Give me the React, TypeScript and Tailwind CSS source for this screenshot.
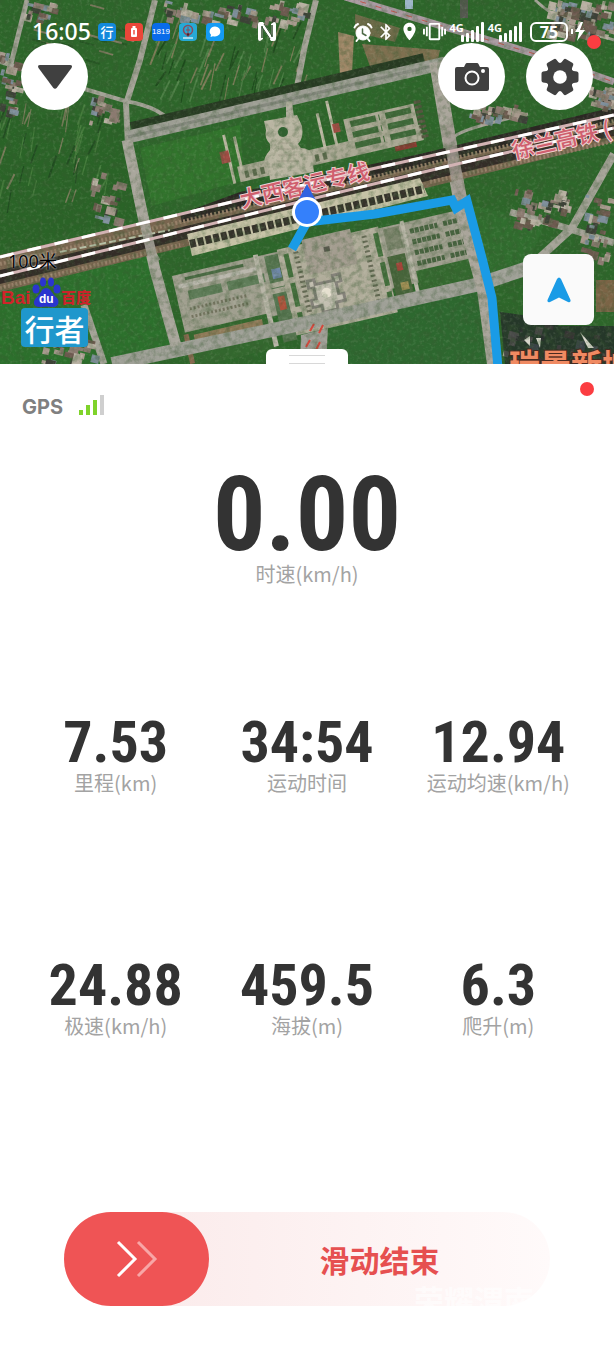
import React from "react";
import { MdBluetooth, MdLocationOn, MdVibration } from "react-icons/md";
import clsx from "clsx";

const digitFont = "font-['Roboto_Condensed',Roboto,sans-serif] font-bold";

const metrics = [
  { value: "7.53", label: "里程(km)" },
  { value: "34:54", label: "运动时间" },
  { value: "12.94", label: "运动均速(km/h)" },
  { value: "24.88", label: "极速(km/h)" },
  { value: "459.5", label: "海拔(m)" },
  { value: "6.3", label: "爬升(m)" },
];

// small seeded generator, keeps the scattered map detail stable between renders
function scatter(
  seed: number,
  count: number,
  x: number,
  y: number,
  w: number,
  h: number
) {
  let s = seed;
  const next = () => {
    s = (s * 16807) % 2147483647;
    return s / 2147483647;
  };
  return Array.from({ length: count }, () => ({
    x: x + next() * w,
    y: y + next() * h,
    a: next(),
    b: next(),
    c: Math.floor(next() * 6),
  }));
}

const roofColors = ["#8b7a70", "#a89a8e", "#6e5a50", "#7f8f9c", "#b8b0a2", "#3d4038"];

const villages = [
  { seed: 11, count: 60, x: 165, y: 0, w: 145, h: 20 },
  { seed: 23, count: 30, x: 0, y: 50, w: 18, h: 60 },
  { seed: 37, count: 90, x: 548, y: 0, w: 64, h: 34 },
  { seed: 5, count: 40, x: 470, y: 104, w: 52, h: 14 },
  { seed: 71, count: 40, x: 590, y: 85, w: 24, h: 18 },
  { seed: 91, count: 45, x: 515, y: 188, w: 50, h: 34 },
  { seed: 17, count: 22, x: 92, y: 172, w: 26, h: 45 },
  { seed: 29, count: 30, x: 582, y: 190, w: 32, h: 70 },
  { seed: 53, count: 20, x: 90, y: 95, w: 24, h: 26 },
  { seed: 67, count: 16, x: 25, y: 2, w: 26, h: 14 },
  { seed: 83, count: 24, x: 42, y: 336, w: 52, h: 26 },
  { seed: 97, count: 26, x: 504, y: 320, w: 108, h: 40 },
];

const road = "#a5a398";

function SatelliteMap() {
  return (
    <svg
      className="absolute inset-0 h-full w-full"
      viewBox="0 0 614 364"
      preserveAspectRatio="xMidYMid slice"
      aria-hidden="true"
    >
      <defs>
        <filter id="grain" x="0" y="0" width="100%" height="100%">
          <feTurbulence type="fractalNoise" baseFrequency="0.16" numOctaves="4" seed="4" />
          <feColorMatrix values="0 0 0 0 0.04  0 0 0 0 0.1  0 0 0 0 0.03  2.4 0 0 0 -0.95" />
        </filter>
        <filter id="light" x="0" y="0" width="100%" height="100%">
          <feTurbulence type="fractalNoise" baseFrequency="0.3" numOctaves="2" seed="9" />
          <feColorMatrix values="0 0 0 0 0.75  0 0 0 0 0.8  0 0 0 0 0.65  0 2.2 0 0 -1.1" />
        </filter>
      </defs>
      <rect width="614" height="364" fill="#2d662a" />
      <path d="M0 115H120L142 215L0 250Z" fill="#2a6327" />
      <path d="M140 148L240 125L244 180L152 206Z" fill="#31742c" />
      <path d="M0 290L90 268L150 255L175 345L105 364H0Z" fill="#2c702c" />
      <path d="M330 322L478 286L492 364H325Z" fill="#2d682f" />
      <path d="M470 205L545 222L524 275L490 270Z" fill="#306d2e" />

      {/* narrow field strips */}
      {scatter(41, 60, 160, 12, 150, 70).map((p, i) => (
        <path
          key={i}
          d={`M${p.x} ${p.y}l${-4 - p.a * 6} ${14 + p.b * 14}`}
          stroke={p.c > 3 ? "#7d7c58" : p.c > 1 ? "#1d4a1c" : "#4d8046"}
          strokeWidth={1 + p.a}
        />
      ))}
      {scatter(8, 50, 0, 100, 110, 90).map((p, i) => (
        <path
          key={i}
          d={`M${p.x} ${p.y}l${-3 - p.a * 5} ${12 + p.b * 16}`}
          stroke={p.c > 4 ? "#7b7c5c" : p.c > 2 ? "#204c20" : "#457c3c"}
          strokeWidth={1 + p.a}
        />
      ))}
      {scatter(77, 18, 30, 0, 105, 60).map((p, i) => (
        <path
          key={i}
          d={`M${p.x} ${p.y}l14 4`}
          stroke={p.c > 3 ? "#807a60" : "#245522"}
          strokeWidth="2"
        />
      ))}
      <path d="M338 32L354 36L352 74L340 76Z" fill="#a08868" />
      <path d="M362 44L440 50L438 60L372 72Z" fill="#7f7050" />
      <path d="M355 14L400 28L395 42L355 32Z" fill="#6d6a48" />
      <rect x="460" y="0" width="8" height="18" fill="#54584f" />
      <rect x="405" y="0" width="8" height="9" fill="#9db5c9" />

      {/* roads */}
      <g fill="none" stroke={road} strokeLinejoin="round">
        <path d="M27 0L10 68" strokeWidth="5" />
        <path d="M0 62L20 68L88 90L125 101Q165 108 172 126" strokeWidth="4" />
        <path d="M155 0L140 60L126 104L128 145" strokeWidth="6" />
        <path d="M316 0L305 45L296 92" strokeWidth="6" />
        <path d="M345 -3L535 54L614 82" strokeWidth="7" stroke="#aa9aa2" />
        <path d="M614 154L572 228L535 262L500 278" strokeWidth="8" />
        <path d="M510 212L560 226L614 243" strokeWidth="7" />
        <path d="M455 136Q465 128 528 114" strokeWidth="3" />
        <path d="M535 0Q560 24 614 40" strokeWidth="3" />
        <path d="M84 305L104 364" strokeWidth="7" />
      </g>
      <path d="M345 -3L535 54L614 82" stroke="#c4564e" strokeDasharray="6 10" fill="none" />
      <path d="M132 132L425 63" stroke="#273a22" strokeWidth="20" />
      <path d="M128 137L445 63" stroke="#9d9e94" strokeWidth="13" />
      <path d="M128 137L445 63" stroke="#86897f" strokeWidth="3" />

      {/* station forecourt, north side */}
      <g transform="translate(308 216) rotate(-13)">
        <path d="M-58 -64H130V-48H-58Z" fill="#aaa894" />
        <path d="M-64 -98V-48M-54 -94V-60M32 -98V-60M44 -108V-62" stroke="#bdb9a4" strokeWidth="3" />
        <rect x="-72" y="-82" width="9" height="12" fill="#a24c44" />
        <rect x="44" y="-84" width="7" height="9" fill="#a24c44" />
        <rect x="56" y="-86" width="72" height="36" fill="#aaa894" />
        {[-80, -69, -58].map((y) => (
          <path
            key={y}
            d={`M62 ${y}H92M98 ${y}H124`}
            stroke="#3f6939"
            strokeWidth="6"
            strokeDasharray="26 3"
          />
        ))}
        <path d="M132 -88V-50" stroke="#55543f" strokeWidth="7" strokeDasharray="3 2" />
        <rect x="100" y="-48" width="22" height="5" fill="#8a3a31" />
        {[-52, -44, -36, 12, 20, 28].map((x) => (
          <rect key={x} x={x} y="-58" width="4" height="7" fill="#5c6a4d" />
        ))}
      </g>
      <path d="M286 102L292 101L294 118L286 119Z" fill="#b3b0a0" />
      <path
        d="M264 121L276 119L297 115L302 126Q304 138 298 144L301 148Q310 148 312 156L314 172L270 180L268 163Q260 162 270 150V144Q264 138 266 130Z"
        fill="#b9b5a2"
      />
      <circle cx="283" cy="132" r="5" fill="#2f6130" />
      <path d="M278 143H293M278 149H295M278 155H297M278 161H299" stroke="#a29e8c" />

      {/* south side square and car parks */}
      <g transform="translate(307 212) rotate(-13)">
        <rect x="-146" y="32" width="304" height="62" fill="#a09f8f" />
        <rect x="-134" y="36" width="60" height="3" fill="#4a6a43" />
        <rect x="-134" y="50" width="34" height="9" fill="#5f7d59" />
        <rect x="-94" y="50" width="38" height="9" fill="#5f7d59" />
        <path d="M-142 44H-60" stroke="#bab7ad" strokeWidth="4" />
        {[68, 76].map((y) => (
          <path
            key={y}
            d={`M-136 ${y}H-78`}
            stroke="#74735f"
            strokeWidth="3"
            strokeDasharray="2 2"
          />
        ))}
        <rect x="-150" y="90" width="88" height="36" fill="#33682e" />
        <rect x="-138" y="94" width="70" height="11" fill="#8f7a58" />
        <rect x="-148" y="92" width="5" height="30" fill="#8a6a50" />
        <path d="M-60 30V124" stroke="#b9b6a8" strokeWidth="5" />
        <rect x="-52" y="34" width="14" height="88" fill="#567550" />
        <rect x="-48" y="48" width="9" height="10" fill="#6f87a8" />
        <rect x="-48" y="76" width="7" height="14" fill="#ad533c" />
        <path d="M-58 64H-36M-58 70H-36" stroke="#aaa896" strokeWidth="5" />
        <rect x="-38" y="30" width="104" height="88" fill="#b1ad9b" />
        <rect x="-12" y="26" width="50" height="36" fill="#a49d90" />
        <rect x="8" y="38" width="6" height="5" fill="#5c5a50" />
        {[-30, 62].map((x) => (
          <path key={x} d={`M${x} 36V112`} stroke="#44703d" strokeWidth="5" strokeDasharray="24 6" />
        ))}
        {[-20, 50].map((x) => (
          <path key={x} d={`M${x} 36V112`} stroke="#686b57" strokeWidth="5" strokeDasharray="2 3" />
        ))}
        <path d="M-17 66H-7V71H9V66H19V76H14V86H19V96H10V103H-8V96H-17V86H-12V76H-17Z" fill="#85827a" />
        <path d="M-14 69H-10V74H12V69H16V74H11V88H16V93H7V100H-5V93H-14V88H-9V74H-14Z" fill="#c3bfb1" />
        <circle cx="1" cy="83" r="5" fill="#e6e0d0" />
        <rect x="70" y="34" width="16" height="22" fill="#7c846c" />
        <rect x="68" y="62" width="18" height="44" fill="#48653b" />
        <rect x="75" y="70" width="6" height="8" fill="#a7443a" />
        <rect x="75" y="90" width="8" height="8" fill="#a39055" />
        <path d="M90 30V114" stroke="#b9b6a8" strokeWidth="4" />
        {[42, 53, 64, 75].map((y) => (
          <path
            key={y}
            d={`M96 ${y}H124M130 ${y}H156`}
            stroke="#47623f"
            strokeWidth="5"
            strokeDasharray="4 1"
          />
        ))}
        <path d="M93 82H164V114H93Z" fill="#34692f" />
      </g>

      <path d="M112 364L310 322L480 284L540 264" stroke="#9fa097" strokeWidth="14" fill="none" />
      <path d="M301 335L328 328L326 364H300Z" fill="#a19f98" />
      <path d="M127 140L142 212L155 270L176 346" stroke="#a9a69c" strokeWidth="11" fill="none" />
      <path d="M436 62L450 145L462 210L484 290L494 364" stroke="#aaa59b" strokeWidth="14" fill="none" />
      <path d="M314 324l-4 7M323 325l-4 8M310 340l-4 7M320 342l-4 8" stroke="#d4473c" strokeWidth="2" />

      {/* railway corridor */}
      <path d="M0 255L614 112V142L0 292Z" fill="#79654f" />
      <path d="M180 214L240 192L420 154L614 107V122L182 222Z" fill="#2b2723" />
      <path d="M0 270L614 125V136L0 284Z" fill="#332c27" />
      <path d="M187 234L420 178L428 196L192 256Z" fill="#c6c2a6" />
      <path d="M190 244L424 189" stroke="#35322a" strokeWidth="8" strokeDasharray="6 2" />
      <path
        d="M0 264L614 121M0 288L180 245M430 182L614 141"
        stroke="#978069"
        strokeWidth="4"
        strokeDasharray="2 2"
      />
      <path d="M60 252L170 230" stroke="#b5bda4" strokeWidth="2" strokeDasharray="7 3" />
      <path d="M137 190L152 255L156 262" stroke="#a9a69c" strokeWidth="10" opacity="0.85" fill="none" />
      <path d="M447 125L462 205" stroke="#a59c94" strokeWidth="12" opacity="0.85" />

      {villages.map((v) =>
        scatter(v.seed, v.count, v.x, v.y, v.w, v.h).map((p, i) => (
          <rect
            key={`${v.seed}-${i}`}
            x={p.x}
            y={p.y}
            width={3 + p.a * 8}
            height={3 + p.b * 6}
            fill={roofColors[p.c]}
            transform={`rotate(14 ${p.x} ${p.y})`}
          />
        ))
      )}
      <path d="M500 312L530 316L560 326H614V364H505Z" fill="#23282a" opacity="0.75" />
      <path d="M524 340l6-4v10zM536 338l5 0l-1 10zM580 332l14 16h-6z" fill="#d8d6cb" />
      <rect x="596" y="280" width="18" height="32" fill="#7b6446" />

      <rect width="614" height="364" filter="url(#grain)" opacity="0.4" />
      <rect width="614" height="364" filter="url(#light)" opacity="0.15" />

      <g fill="none" strokeWidth="3">
        <path d="M0 257L240 200L367 170L614 115" stroke="#d2b3b4" />
        <path d="M0 276L163 236L307 200L457 164L614 128" stroke="#d2b3b4" />
        <path d="M0 257L240 200L367 170L614 115" stroke="#fff" strokeDasharray="14 14" />
        <path d="M0 276L163 236L307 200L457 164L614 128" stroke="#fff" strokeDasharray="14 14" />
      </g>

      <g
        className="font-['Noto_Sans_CJK_SC',sans-serif] font-medium"
        fill="#cf5f6e"
        stroke="#f0cfd1"
        strokeWidth="2"
        paintOrder="stroke"
        fontSize="22"
      >
        <text x="242" y="208" transform="rotate(-13 242 208)">大西客运专线</text>
        <text x="514" y="159" transform="rotate(-13 514 159)">徐兰高铁 (</text>
      </g>
      <text
        x="509"
        y="376"
        className="font-['Noto_Sans_CJK_SC',sans-serif] font-bold"
        fontSize="31"
        fill="#f08a62"
        stroke="#4a2a20"
        strokeWidth="2"
        paintOrder="stroke"
      >
        瑞景新城
      </text>

      <path
        d="M292 249L307 222L375 214L452 200L456 208L467 201L482 258L492 298L498 368"
        fill="none"
        stroke="#1a9be6"
        strokeWidth="9"
      />
      <path d="M307 184L319 206H295Z" fill="#2f62e0" />
      <circle cx="307" cy="212" r="15" fill="#fff" />
      <circle cx="307" cy="212" r="12" fill="#3480fb" />
    </svg>
  );
}

function SignalBars() {
  return (
    <span className="flex items-start">
      <span className="text-[11px] leading-none font-bold">4G</span>
      <svg width="25" height="20" viewBox="0 0 25 20" className="-ml-1" fill="#fff" aria-hidden="true">
        <rect x="1" y="13" width="3" height="7" rx="1" />
        <rect x="6" y="11" width="3" height="9" rx="1" />
        <rect x="11" y="8" width="3" height="12" rx="1" />
        <rect x="16" y="4" width="3" height="16" rx="1" />
        <rect x="21" y="0" width="3" height="20" rx="1" />
      </svg>
    </span>
  );
}

function StatusBar() {
  return (
    <div className="flex h-[43px] items-center pt-5 pr-[29px] pl-8 text-white">
      <span className="w-[66px] font-['Noto_Sans',sans-serif] text-[23px] leading-none font-medium">16:05</span>
      <div className="flex items-center gap-[9px]">
        <span className="flex size-[18px] items-center justify-center rounded-sm bg-[#1389dc] font-['Noto_Sans_CJK_SC',sans-serif] text-[13px] leading-none font-medium">
          行
        </span>
        <svg width="18" height="18" viewBox="0 0 18 18" aria-hidden="true">
          <rect width="18" height="18" rx="4" fill="#ea4639" />
          <rect x="6" y="5" width="6" height="9" rx="1" fill="#fff" />
          <path d="M7.500 3h3v2h-3z" fill="#fff" />
          <path d="M8.300 7h1.400v4.500h-1.400z" fill="#ea4639" />
        </svg>
        <span className="flex size-[18px] items-center justify-center rounded-sm bg-[#0a6bea] font-['Liberation_Sans',sans-serif] text-[8px] leading-none">
          1819
        </span>
        <svg width="18" height="18" viewBox="0 0 18 18" aria-hidden="true">
          <rect width="18" height="18" rx="4" fill="#27a9d6" />
          <circle cx="9" cy="7" r="4.500" fill="none" stroke="#8a4a5c" strokeWidth="1.500" />
          <path d="M9 4v5M7 7h4M8 10h2v3H8z" stroke="#8a4a5c" strokeWidth="1" />
          <path d="M4 15h10" stroke="#cdeaf5" strokeWidth="1.500" />
        </svg>
        <svg width="18" height="18" viewBox="0 0 18 18" aria-hidden="true">
          <rect width="18" height="18" rx="4" fill="#149bf5" />
          <path d="M9 3.500a5.500 5 0 1 1-2 9.700L4.500 14l.5-2.200A5.500 5 0 0 1 9 3.500z" fill="#fff" />
        </svg>
      </div>
      <svg width="18" height="19" viewBox="0 0 18 19" className="ml-[34px]" fill="none" aria-hidden="true">
        <path d="M2 0H5L13 12V2L16 0Q18 0 18 2V17Q18 19 16 19H13L5 7V17L2 19Q0 19 0 17V2Q0 0 2 0Z" fill="#fff" />
        <path d="M4 4V16M14 3V15" stroke="#2f4a2c" strokeWidth="1.500" />
        <path d="M6 2L14 14M4 5L12 17" stroke="#2f4a2c" strokeWidth="1" />
      </svg>
      <div className="ml-auto flex items-center gap-[3px]">
        <svg width="20" height="20" viewBox="0 0 20 20" fill="none" stroke="#fff" strokeLinecap="round" aria-hidden="true">
          <circle cx="10" cy="11" r="7" fill="#fff" />
          <path d="M1.500 5.500A6 6 0 0 1 5 2M18.500 5.500A6 6 0 0 0 15 2M5 17l-1.500 2M15 17l1.500 2" strokeWidth="2" />
          <path d="M9.500 7v4.500l3.500 2" stroke="#4d6a47" strokeWidth="1.500" />
        </svg>
        <MdBluetooth size={20} stroke="#fff" />
        <MdLocationOn size={21} />
        <MdVibration size={23} />
        <SignalBars />
        <SignalBars />
        <span className="ml-1 flex h-5 w-[38px] items-center justify-center rounded-md border-2 border-white font-['Noto_Sans',sans-serif] text-base leading-none font-bold">
          75
        </span>
        <svg width="14" height="19" viewBox="0 0 14 19" fill="#fff" aria-hidden="true">
          <path d="M0 7h2v5H0zM10 0L4 10h4l-2 9 8-11H9l3-8z" />
        </svg>
      </div>
    </div>
  );
}

function RoundButton({ label, children }: { label: string; children: React.ReactNode }) {
  return (
    <button
      type="button"
      aria-label={label}
      className="flex size-[67px] items-center justify-center rounded-full bg-white text-[#404040]"
    >
      {children}
    </button>
  );
}

function BaiduLogo() {
  return (
    <svg width="92" height="31" viewBox="0 0 92 31" aria-hidden="true">
      <text x="1" y="27" fontSize="19" fill="#d0242a" className="font-['Liberation_Sans',sans-serif] font-bold">
        Bai
      </text>
      <g fill="#2a35cf">
        <ellipse cx="36" cy="12" rx="3.500" ry="4.500" />
        <ellipse cx="43" cy="5" rx="3" ry="4.500" />
        <ellipse cx="51" cy="5" rx="3" ry="4.500" />
        <ellipse cx="57" cy="12" rx="3.500" ry="4.500" />
        <path d="M46 11C51 11 52 17 56 20C61 24 58 31 52 30Q46 29 41 30C33 31 32 24 37 20C41 17 41 11 46 11Z" />
      </g>
      <text x="39" y="26" fontSize="12" fill="#fff" className="font-['Liberation_Sans',sans-serif] font-bold">
        du
      </text>
      <text x="61" y="26" fontSize="15" fill="#c9242a" className="font-['Noto_Sans_CJK_SC',sans-serif] font-black">
        百度
      </text>
    </svg>
  );
}

function MapPanel() {
  return (
    <header className="relative h-[364px] overflow-hidden">
      <SatelliteMap />
      <div className="absolute inset-0 flex flex-col">
        <StatusBar />
        <div className="flex justify-between px-[21px]">
          <RoundButton label="收起">
            <svg width="36" height="26" viewBox="0 0 36 26" fill="currentColor" aria-hidden="true">
              <path d="M3 1H33Q36 1 34.500 4L20 23.500Q18 26 16 23.500L1.500 4Q0 1 3 1Z" />
            </svg>
          </RoundButton>
          <div className="flex gap-[21px]">
            <RoundButton label="拍照">
              <svg width="34" height="30" viewBox="0 0 34 30" fill="currentColor" aria-hidden="true">
                <path d="M2 5H9L10.500 2Q11 1 12 1H22Q23 1 23.500 2L25 5H32Q34 5 34 7V27Q34 29 32 29H2Q0 29 0 27V7Q0 5 2 5Z" />
                <circle cx="17" cy="16" r="6.500" fill="none" stroke="#fff" strokeWidth="2" />
                <circle cx="28" cy="9" r="2" fill="#fff" />
              </svg>
            </RoundButton>
            <div className="relative">
              <RoundButton label="设置">
                <svg width="38" height="38" viewBox="-19 -19 38 38" fill="currentColor" aria-hidden="true">
                  <circle r="13" />
                  {[0, 60, 120, 180, 240, 300].map((deg) => (
                    <path
                      key={deg}
                      d="M9 -9L13.500 -6L17 -5.500Q18.500 -5.200 18.500 -3.500V3.500Q18.500 5.200 17 5.500L13.500 6L9 9Z"
                      transform={`rotate(${deg})`}
                    />
                  ))}
                  <circle r="6.800" fill="#fff" />
                </svg>
              </RoundButton>
              <span className="absolute -top-2 -right-2 size-3.5 rounded-full bg-[#fb3d41]" />
            </div>
          </div>
        </div>
        <div className="mt-auto flex items-end justify-between pr-5 pb-[17px]">
          <div className="flex flex-col items-start">
            <span className="ml-2 font-['Open_Sans','Noto_Sans_CJK_SC',sans-serif] text-lg leading-5 text-black [text-shadow:0_0_2px_#fff]">
              100米
            </span>
            <div className="mt-1.5">
              <BaiduLogo />
            </div>
            <span className="ml-[21px] flex h-[39px] w-[67px] items-center justify-center rounded-sm bg-[#1f97cc] font-['Noto_Sans_CJK_SC',sans-serif] text-3xl leading-none font-medium text-white">
              行者
            </span>
          </div>
          <button
            type="button"
            aria-label="定位"
            className="mb-[22px] flex size-[71px] items-center justify-center rounded-lg bg-[#fafafa]"
          >
            <svg width="24" height="26" viewBox="0 0 24 26" fill="#1a9be6" aria-hidden="true">
              <path d="M10 2Q12 -1 14 2L23.500 23Q24 26 21 25L12 20.500L3 25Q0 26 .5 23Z" />
            </svg>
          </button>
        </div>
      </div>
      <div className="absolute bottom-0 left-1/2 flex h-[15px] w-[82px] -translate-x-1/2 flex-col items-center justify-between rounded-t-md bg-white pt-1.5">
        <span className="h-px w-9 bg-[#d8d8d8]" />
        <span className="h-px w-9 bg-[#d8d8d8]" />
      </div>
    </header>
  );
}

function Metric({ value, label, large }: { value: string; label: string; large?: boolean }) {
  return (
    <div className="flex flex-col items-center">
      <span
        className={clsx(
          digitFont,
          "text-[#333]",
          large ? "text-[104px] leading-[90px]" : "text-[58px] leading-[53px]"
        )}
      >
        {value}
      </span>
      <span className="font-['Noto_Sans_CJK_SC',sans-serif] text-xl leading-7 whitespace-nowrap text-[#a3a3a3]">
        {label}
      </span>
    </div>
  );
}

export default function App() {
  return (
    <div className="flex min-h-screen flex-col bg-white">
      <MapPanel />
      <main className="flex grow flex-col">
        <div className="flex items-start justify-between pt-[18px] pr-5 pl-[22px]">
          <div className="flex items-start gap-4 pt-3">
            <span className="font-['Inter',sans-serif] text-xl leading-[26px] font-bold text-[#808080]">GPS</span>
            <span className="flex h-[21px] items-end gap-[3px]">
              <span className="h-[5px] w-1 bg-[#7fd32b]" />
              <span className="h-2.5 w-1 bg-[#7fd32b]" />
              <span className="h-[15px] w-1 bg-[#7fd32b]" />
              <span className="h-5 w-1 bg-[#cfcfcf]" />
            </span>
          </div>
          <span className="size-3.5 rounded-full bg-[#fb3d41]" />
        </div>

        <div className="mt-[50px]">
          <Metric value="0.00" label="时速(km/h)" large />
        </div>
        <div className="mt-32 grid grid-cols-3 gap-y-[162px] px-5">
          {metrics.map((m) => (
            <Metric key={m.label} value={m.value} label={m.label} />
          ))}
        </div>

        <div className="relative mx-16 mt-auto mb-11 flex items-center rounded-full bg-linear-to-r from-[#fae8e8] to-[#fffafa]">
          <button
            type="button"
            aria-label="滑动"
            className="flex h-[94px] w-[145px] items-center justify-center rounded-full bg-[#ef5455]"
          >
            <svg width="42" height="38" viewBox="0 0 42 38" fill="none" strokeWidth="3" aria-hidden="true">
              <path d="M2 2L19 19L2 36" stroke="#fff" />
              <path d="M22 2L39 19L22 36" stroke="#f8a6a6" />
            </svg>
          </button>
          <span className="grow text-center font-['Noto_Sans_CJK_SC',sans-serif] text-3xl font-bold text-[#e65050]">
            滑动结束
          </span>
          <span className="absolute right-4 -bottom-2 font-['Noto_Sans_CJK_SC',sans-serif] text-3xl leading-none font-bold text-white/60">
            荣耀渭南
          </span>
        </div>
      </main>
    </div>
  );
}
